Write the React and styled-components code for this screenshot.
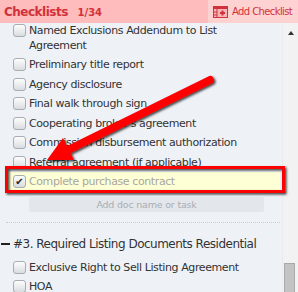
import React from 'react';
import styled, { createGlobalStyle } from 'styled-components';

const GlobalStyle = createGlobalStyle`
  html, body { margin: 0; padding: 0; }
  body {
    font-family: "DejaVu Sans", Verdana, sans-serif;
    background: #eef2f7;
  }
`;

const topItems = [
  { label: 'Named Exclusions Addendum to List Agreement' },
  { label: 'Preliminary title report' },
  { label: 'Agency disclosure' },
  { label: 'Final walk through sign' },
  { label: "Cooperating broker's agreement" },
  { label: 'Commission disbursement authorization' },
  { label: 'Referral agreement (if applicable)' },
  { label: 'Complete purchase contract', done: true },
];

const sectionItems = [
  { label: 'Exclusive Right to Sell Listing Agreement' },
  { label: 'HOA' },
];

export default function App() {
  return (
    <>
      <GlobalStyle />
      <Panel>
        <Header>
          <TitleArea>
            Checklists <Count>1/34</Count>
          </TitleArea>
          <AddChecklist>
            <ListIcon />
            Add Checklist
          </AddChecklist>
        </Header>
        <Body>
          <List>
            {topItems.map((item, idx) => (
              <Row key={idx} $done={item.done}>
                <Box $checked={item.done}>{item.done ? '✔' : ''}</Box>
                <Label $done={item.done}>{item.label}</Label>
              </Row>
            ))}
            <AddTask>Add doc name or task</AddTask>
            <Divider />
            <SectionTitle>
              <Dash />#3. Required Listing Documents Residential
            </SectionTitle>
            {sectionItems.map((item, idx) => (
              <Row key={idx}>
                <Box />
                <Label>{item.label}</Label>
              </Row>
            ))}
          </List>
          <Track>
            <UpArrow />
            <Thumb />
          </Track>
        </Body>
        <Annotation />
      </Panel>
    </>
  );
}

const ListIcon = () => (
  <svg width="15" height="12" viewBox="0 0 15 12">
    <rect x="0.5" y="0.5" width="14" height="11" fill="#f7b5b5" stroke="#d2313b" />
    <rect x="0.5" y="0.5" width="14" height="2.5" fill="#d2313b" />
    <path d="M4 3v9M0 6h4M0 9h4" stroke="#d2313b" strokeWidth="1" />
    <path d="M9.5 4.5v5M7 7h5" stroke="#d2313b" strokeWidth="2" />
  </svg>
);

// red box + arrow drawn over the list
const Annotation = () => (
  <Overlay viewBox="0 0 298 292" width="298" height="292">
    <defs>
      <filter id="shade" x="-10%" y="-10%" width="130%" height="130%">
        <feDropShadow dx="1.5" dy="1.5" stdDeviation="1.2" floodColor="#000" floodOpacity="0.75" />
      </filter>
    </defs>
    <g filter="url(#shade)">
      <rect x="6.5" y="167.5" width="277" height="24" fill="none" stroke="#f00" strokeWidth="3" />
      <line x1="210" y1="80" x2="70" y2="149" stroke="#f00" strokeWidth="8" strokeLinecap="round" />
      <polygon points="47,160 74,160 63,138" fill="#f00" />
    </g>
  </Overlay>
);

const Panel = styled.div`
  position: relative;
  width: 298px;
  height: 292px;
  overflow: hidden;
  display: flex;
  flex-direction: column;
  background: #eef2f7;
`;

const Header = styled.div`
  height: 23px;
  display: flex;
  flex-shrink: 0;
  position: relative;
  z-index: 1;
`;

const TitleArea = styled.div`
  flex: 1;
  background: #ffbcbc;
  color: #d2313b;
  font-weight: bold;
  font-size: 12px;
  letter-spacing: -0.5px;
  display: flex;
  align-items: center;
  padding-left: 4px;
  white-space: pre;
`;

const Count = styled.span`
  font-size: 10px;
  letter-spacing: 0;
  margin-left: 6px;
  margin-top: 2px;
`;

const AddChecklist = styled.div`
  width: 85px;
  padding-left: 5px;
  background: #ffd2d2;
  color: #d2313b;
  font-size: 10px;
  letter-spacing: -0.6px;
  white-space: nowrap;
  display: flex;
  align-items: center;
  gap: 4px;
`;

const Body = styled.div`
  flex: 1;
  display: flex;
  min-height: 0;
`;

const List = styled.div`
  flex: 1;
  margin-top: -2.5px;
`;

const Row = styled.div`
  display: flex;
  align-items: flex-start;
  gap: 3px;
  padding: 2px 0 2.5px 5px;
  margin: 0 2px 0 8px;
  background: ${(p) => (p.$done ? '#ffffd6' : 'transparent')};
`;

const Box = styled.span`
  flex-shrink: 0;
  width: 11px;
  height: 11px;
  margin-top: 1px;
  border: 1px solid #a9acb0;
  border-radius: 3px;
  background: linear-gradient(#fdfdfd, #d9dcdf);
  font-size: 10px;
  line-height: 11px;
  text-align: center;
  color: #222;
`;

const Label = styled.span`
  max-width: 230px;
  font-size: 11px;
  letter-spacing: -0.4px;
  line-height: 15px;
  color: ${(p) => (p.$done ? '#a7a7a0' : '#333')};
`;

const AddTask = styled.div`
  margin: 5px 18px 0 29px;
  height: 15px;
  line-height: 15px;
  background: #e3e7ec;
  border-radius: 2px;
  text-align: center;
  font-size: 9.5px;
  letter-spacing: -0.2px;
  color: #a9adb2;
`;

const Divider = styled.div`
  margin: 10px 2px 0 6px;
  border-top: 1px dotted #c9cdd2;
`;

const SectionTitle = styled.div`
  margin-top: 13px;
  margin-bottom: 6px;
  display: flex;
  align-items: center;
  gap: 3px;
  font-size: 12px;
  letter-spacing: -0.5px;
  white-space: nowrap;
  line-height: 16px;
  color: #333;
`;

const Dash = styled.span`
  width: 9px;
  height: 2px;
  margin-left: 1px;
  background: #222;
`;

const Track = styled.div`
  width: 15px;
  background: #f2f2f3;
  display: flex;
  flex-direction: column;
  justify-content: space-between;
  align-items: center;
  border-left: 1px solid #ebebec;
`;

const UpArrow = styled.span`
  margin-top: 8px;
  width: 0;
  height: 0;
  border-left: 3.5px solid transparent;
  border-right: 3.5px solid transparent;
  border-bottom: 4px solid #333;
`;

const Thumb = styled.span`
  width: 9px;
  height: 28px;
  margin-left: -2px;
  background: #c3c3c3;
  border: 1px solid #a9a9a9;
  border-bottom: none;
`;

const Overlay = styled.svg`
  position: absolute;
  left: 0;
  top: 0;
  pointer-events: none;
  z-index: 2;
`;
